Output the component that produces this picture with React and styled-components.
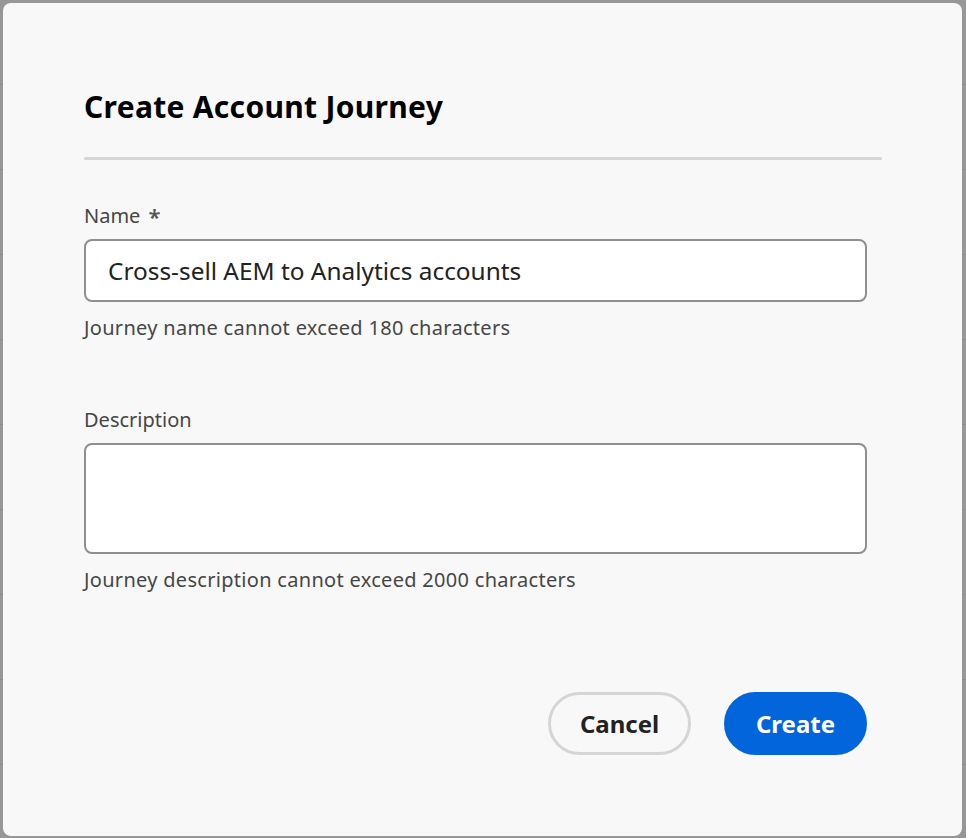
import styled, { createGlobalStyle } from 'styled-components';

const GlobalStyle = createGlobalStyle`
	html, body {
		margin: 0;
		padding: 0;
	}
	body {
		background-color: #979797;
		background-image: repeating-linear-gradient(
			to bottom,
			transparent 0,
			transparent 84px,
			#8c8c8c 84px,
			#8c8c8c 85px
		);
		font-family: 'Noto Sans', 'Open Sans', sans-serif;
	}
`;

const Backdrop = styled.div`
	box-sizing: border-box;
	width: 966px;
	height: 838px;
	padding: 3px 4px 2px 3px;
`;

const Dialog = styled.div`
	box-sizing: border-box;
	height: 100%;
	background: #f8f8f8;
	border-radius: 8px;
	padding: 85px 80px 0 81px;
	display: flex;
	flex-direction: column;
`;

const Title = styled.h2`
	margin: 0;
	font-size: 30px;
	line-height: 38px;
	font-weight: 700;
	color: #000;
	letter-spacing: 0.3px;
`;

const Divider = styled.hr`
	margin: 31px 0 0;
	border: none;
	height: 3px;
	border-radius: 2px;
	background: #d5d5d5;
`;

const Form = styled.div`
	display: flex;
	flex-direction: column;
	width: 783px;
`;

const Field = styled.div`
	display: flex;
	flex-direction: column;
	margin-top: ${({ $top }) => $top}px;
`;

const Label = styled.label`
	font-size: 20px;
	line-height: 26px;
	color: #464646;
	margin-bottom: 10px;
	display: flex;
	gap: 8px;
	align-items: center;
`;

const Star = styled.span`
	font-size: 22px;
	font-weight: 600;
	color: #555;
`;

const TextInput = styled.input`
	box-sizing: border-box;
	height: 63px;
	padding: 0 22px;
	border: 2px solid #8f8f8f;
	border-radius: 8px;
	background: #fff;
	font-family: inherit;
	font-size: 24.4px;
	color: #222;
	outline: none;
`;

const TextArea = styled.textarea`
	box-sizing: border-box;
	height: 111px;
	padding: 12px 22px;
	border: 2px solid #8f8f8f;
	border-radius: 8px;
	background: #fff;
	font-family: inherit;
	font-size: 24px;
	color: #222;
	resize: none;
	outline: none;
`;

const Help = styled.div`
	margin-top: 13px;
	font-size: 20px;
	line-height: 26px;
	letter-spacing: 0.3px;
	color: #464646;
`;

const Footer = styled.div`
	display: flex;
	justify-content: flex-end;
	gap: 33px;
	width: 783px;
	margin-top: 99px;
`;

const Button = styled.button`
	box-sizing: border-box;
	width: 143px;
	height: 63px;
	border-radius: 32px;
	font-family: inherit;
	font-size: 24px;
	font-weight: 700;
	cursor: pointer;
	border: 3px solid ${({ $primary }) => ($primary ? '#0265dc' : '#d5d5d5')};
	background: ${({ $primary }) => ($primary ? '#0265dc' : '#f8f8f8')};
	color: ${({ $primary }) => ($primary ? '#fff' : '#222')};
`;

export default function App() {
	return (
		<>
			<GlobalStyle />
			<Backdrop>
				<Dialog>
					<Title>Create Account Journey</Title>
					<Divider />
					<Form>
						<Field $top={43}>
							<Label>
								Name <Star>*</Star>
							</Label>
							<TextInput defaultValue="Cross-sell AEM to Analytics accounts" />
							<Help>Journey name cannot exceed 180 characters</Help>
						</Field>
						<Field $top={66}>
							<Label>Description</Label>
							<TextArea />
							<Help>Journey description cannot exceed 2000 characters</Help>
						</Field>
					</Form>
					<Footer>
						<Button>Cancel</Button>
						<Button $primary>Create</Button>
					</Footer>
				</Dialog>
			</Backdrop>
		</>
	);
}
